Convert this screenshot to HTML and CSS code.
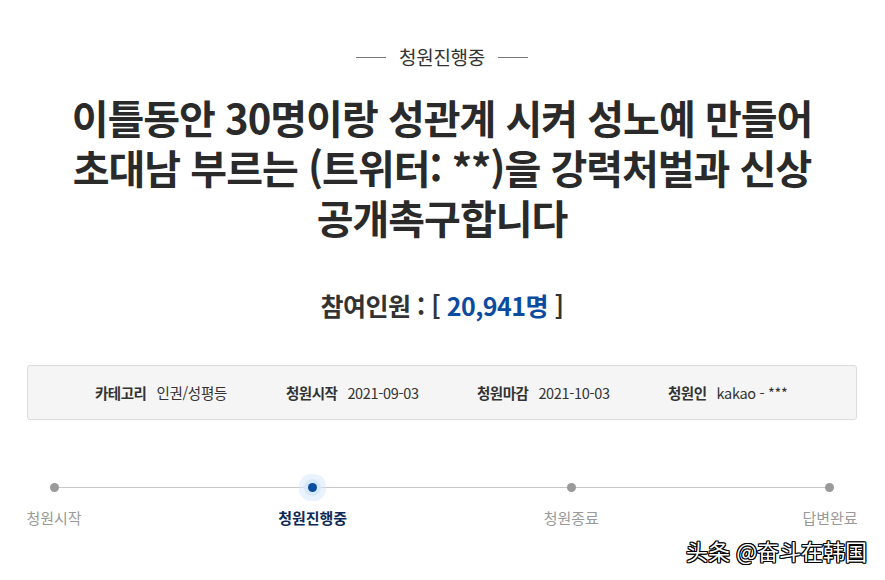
FILE: index.html
```html
<!DOCTYPE html>
<html lang="ko">
<head>
<meta charset="utf-8">
<link rel="stylesheet" href="styles.css">
</head>
<body>
<div class="page">
  <div class="status"><span class="dash"></span><span class="status-text">청원진행중</span><span class="dash"></span></div>
  <h1 class="title"><span class="tl">이틀동안 30명이랑 성관계 시켜 성노예 만들어</span><span class="tl">초대남 부르는 (트위터: **)을 강력처벌과 신상</span><span class="tl">공개촉구합니다</span></h1>
  <div class="count">참여인원 : [ <span class="num">20,941명</span> ]</div>
  <div class="info">
    <div class="info-item"><b>카테고리</b><span>인권/성평등</span></div>
    <div class="info-item"><b>청원시작</b><span>2021-09-03</span></div>
    <div class="info-item"><b>청원마감</b><span>2021-10-03</span></div>
    <div class="info-item"><b>청원인</b><span>kakao - ***</span></div>
  </div>
  <div class="steps">
    <div class="track"></div>
    <div class="step"><span class="dot"></span><span class="label">청원시작</span></div>
    <div class="step active"><span class="dot"></span><span class="label">청원진행중</span></div>
    <div class="step"><span class="dot"></span><span class="label">청원종료</span></div>
    <div class="step"><span class="dot"></span><span class="label">답변완료</span></div>
  </div>
  <div class="watermark">头条 @奋斗在韩国</div>
</div>
</body>
</html>
```
FILE: styles.css
```css
html, body { margin: 0; padding: 0; background: #fff; }
body { font-family: "Noto Sans CJK KR", "Noto Sans", sans-serif; color: #333; }
.page { position: relative; width: 885px; height: 580px; padding: 0 28px 0 27px; box-sizing: border-box; overflow: hidden; }
.status { display: flex; justify-content: center; align-items: center; gap: 13px; padding-top: 44px; height: 26px; }
.dash { width: 30px; height: 1px; background: #777; }
.status-text { font-size: 19px; color: #333; line-height: 26px; letter-spacing: -0.3px; }
.title { margin: 22px 0 0; display: flex; flex-direction: column; align-items: center; font-size: 40px; font-weight: 700; color: #2a2a2a; letter-spacing: -1px; }
.tl { display: block; height: 50px; line-height: 50px; white-space: nowrap; }
.count { margin-top: 46px; text-align: center; font-size: 25px; font-weight: 700; color: #333; line-height: 34px; letter-spacing: -0.5px; }
.num { color: #0b4ca0; }
.info { margin-top: 43px; height: 55px; display: grid; grid-template-columns: repeat(4, 191px); align-items: center; padding-left: 67px; background: #f5f5f5; border: 1px solid #dcdcdc; border-radius: 3px; font-size: 14.5px; color: #333; box-sizing: border-box; }
.info-item { display: flex; gap: 10px; white-space: nowrap; }
.info-item b { font-weight: 700; letter-spacing: -0.5px; }
.info-item span { letter-spacing: -0.3px; }
.steps { position: relative; margin-top: 57px; display: flex; justify-content: space-between; }
.track { position: absolute; left: 26px; right: 28px; top: 10px; height: 1px; background: #c8c8c8; }
.step { position: relative; width: 54px; display: flex; flex-direction: column; align-items: center; }
.dot { width: 9px; height: 9px; margin: 6px 0; border-radius: 50%; background: #9a9a9a; position: relative; }
.step.active .dot { background: #0b4ca0; box-shadow: 0 0 0 4px #d6e8fb, 0 0 0 9px rgba(214,232,251,0.5); }
.label { margin-top: 10px; font-size: 15px; color: #999; white-space: nowrap; line-height: 20px; }
.step.active .label { color: #0d2a57; font-weight: 700; }
.watermark { position: absolute; right: 18px; bottom: 14px; font-family: "Noto Sans CJK SC", sans-serif; font-size: 22px; color: #fff; text-shadow: 1px 1px 0 #000, -1px -1px 0 #000, 1px -1px 0 #000, -1px 1px 0 #000, 0 1px 0 #000, 0 -1px 0 #000, 1px 0 0 #000, -1px 0 0 #000; }
```
